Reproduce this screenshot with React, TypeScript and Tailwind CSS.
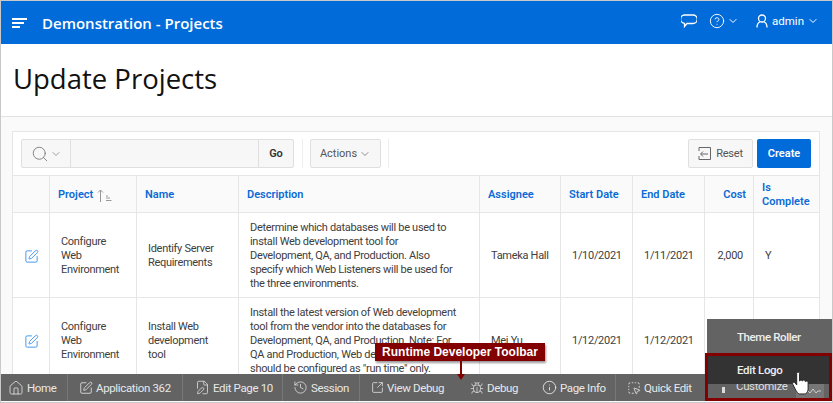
import { ChevronDown, CircleHelp, Search, SquarePen, House, FilePen, History, SquareArrowOutUpRight, Bug, Info, SquareDashedMousePointer } from "lucide-react";

const cols = [37, 87, 102, 241, 81, 72, 72, 49, 65];
const heads = ["", "Project", "Name", "Description", "Assignee", "Start Date", "End Date", "Cost", "Is Complete"];
const cell = "border-r border-b border-[#e6e6e6] pt-[2px]";

function Row({ name, desc, who, a, b, cost, done }: { name: string; desc: string[]; who: string; a: string; b: string; cost: string; done: string }) {
  return (
    <tr className="h-[85px] bg-white tracking-[-0.3px]">
      <td className={`${cell} text-center`}><SquarePen size={15} strokeWidth={1.5} className="inline text-[#3f93ea]" /></td>
      <td className={`${cell} pl-[11px]`}>Configure<br />Web<br />Environment</td>
      <td className={`${cell} pl-[11px] pr-[18px]`}>{name}</td>
      <td className={`${cell} pl-[11px] whitespace-nowrap`}>{desc.map((d) => <div key={d}>{d}</div>)}</td>
      <td className={`${cell} pl-[11px]`}>{who}</td>
      <td className={`${cell} pl-[11px]`}>{a}</td>
      <td className={`${cell} pl-[11px]`}>{b}</td>
      <td className={`${cell} text-right pr-[10px]`}>{cost}</td>
      <td className="border-b border-[#e6e6e6] pt-[2px] pl-[11px]">{done}</td>
    </tr>
  );
}

function Tool({ icon, label, sep = true, w, pl }: { icon: React.ReactNode; label: string; sep?: boolean; w: string; pl: string }) {
  return (
    <div className={`${w} ${pl} h-full flex items-center gap-[3px] shrink-0 ${sep ? "border-r border-[#777]" : ""}`}>
      {icon}<span className="pt-[1px]">{label}</span>
    </div>
  );
}

export default function App() {
  const ic = "text-[#e8e8e8]";
  return (
    <div className="relative w-[833px] h-[403px] overflow-hidden bg-[#fafafa] border border-[#c9c9c9] text-[11px] leading-[14px] text-[#404040] font-['Roboto','Open_Sans',sans-serif]">
      <header className="h-[43px] bg-[#016bda] text-white flex items-center">
        <svg width="16" height="10" viewBox="0 0 16 10" className="ml-[11px] mr-[14px]" fill="white"><rect x="0" y="0" width="15" height="2" /><rect x="0" y="4" width="12" height="2" /><rect x="0" y="8" width="8" height="2" /></svg>
        <span className="text-[15px] font-semibold font-['Open_Sans',sans-serif]">Demonstration - Projects</span>
        <div className="ml-auto flex items-center text-[11.5px] pb-[3px]">
          <svg width="16" height="14" viewBox="0 0 16 14" fill="none" stroke="white" strokeWidth="1.3"><path d="M4 1h8a3.300 3.300 0 0 1 0 8.500H6L3.500 12.500V9.300A3.300 3.300 0 0 1 4 1z" /></svg>
          <CircleHelp size={16} strokeWidth={1.4} className="ml-[12px]" />
          <ChevronDown size={12} strokeWidth={2} className="ml-[2px]" />
          <svg width="12" height="14" viewBox="0 0 12 14" fill="none" stroke="white" strokeWidth="1.3" className="ml-[17px]"><circle cx="6" cy="4.500" r="3.500" /><path d="M1 13.500c0-3 1.500-5 3-5.500M11 13.500c0-3-1.500-5-3-5.500" /></svg>
          <span className="ml-[4px]">admin</span>
          <ChevronDown size={12} strokeWidth={2} className="ml-[3px] mr-[13px]" />
        </div>
      </header>
      <div className="h-[73px] bg-white border-b border-[#e2e2e2] flex items-center pl-[12px] pb-[2px] text-[27.5px] text-[#111] font-['Open_Sans',sans-serif]">Update Projects</div>
      <section className="ml-[11px] mt-[14px] w-[808px] border border-[#e6e6e6] bg-white">
        <div className="h-[44px] flex items-center pl-[8px] pr-[8px] border-b border-[#e6e6e6]">
          <div className="h-[29px] w-[273px] flex border border-[#dfdfdf] rounded-[2px] bg-[#f7f7f7]">
            <div className="w-[49px] flex items-center justify-center border-r border-[#dfdfdf] text-[#707070]"><Search size={18} strokeWidth={1.1} /><ChevronDown size={12} strokeWidth={1.3} className="ml-[1px]" /></div>
            <div className="flex-1" />
            <div className="w-[35px] flex items-center justify-center border-l border-[#dfdfdf] font-semibold text-[#333]">Go</div>
          </div>
          <div className="w-px h-[29px] bg-[#eee] ml-[8px]" />
          <div className="h-[29px] w-[71px] ml-[7px] flex items-center justify-center border border-[#dfdfdf] rounded-[2px] bg-[#f7f7f7] text-[#555]">Actions<ChevronDown size={12} strokeWidth={1.3} className="ml-[2px]" /></div>
          <div className="w-px h-[29px] bg-[#eee] ml-[7px]" />
          <div className="h-[29px] w-[65px] ml-auto flex items-center justify-center gap-[5px] border border-[#dfdfdf] rounded-[2px] bg-[#f7f7f7] text-[#555] tracking-[-0.2px]">
            <svg width="13" height="13" viewBox="0 0 13 13" fill="none" stroke="#666"><path d="M1 4V.5h11.500v12H1V9M10 7H3M5 4.500 2.500 7 5 9.500" /></svg>
            Reset
          </div>
          <div className="h-[29px] w-[54px] ml-[4px] flex items-center justify-center rounded-[2px] bg-[#016bda] text-white font-semibold">Create</div>
        </div>
        <table className="table-fixed border-separate border-spacing-0 w-[806px]">
          <colgroup>{cols.map((c, i) => <col key={i} style={{ width: c }} />)}</colgroup>
          <thead>
            <tr className="h-[37px] bg-[#fafafa]">
              {heads.map((t, i) => (
                <th key={i} className={`font-semibold text-[#0a6bd6] border-b border-[#e6e6e6] pt-[2px] ${i === 7 ? "text-right pr-[7px]" : "text-left pl-[8px]"} ${i < 8 ? "border-r" : ""}`}>
                  {t}
                  {i === 1 && <svg width="15" height="13" viewBox="0 0 15 13" className="inline ml-[4px] text-[#999]" fill="none" stroke="currentColor"><path d="M3.500 13V1M1 3.500l2.500-2.500 2.500 2.500M9 7h2M9 9h4M9 11.500h5.500" /></svg>}
                </th>
              ))}
            </tr>
          </thead>
          <tbody>
            <Row name="Identify Server Requirements" desc={["Determine which databases will be used to", "install Web development tool for", "Development, QA, and Production. Also", "specify which Web Listeners will be used for", "the three environments."]} who="Tameka Hall" a="1/10/2021" b="1/11/2021" cost="2,000" done="Y" />
            <Row name="Install Web development tool" desc={["Install the latest version of Web development", "tool from the vendor into the databases for", "Development, QA, and Production. Note: For", "QA and Production, Web development tool", "should be configured as \"run time\" only."]} who="Mei Yu" a="1/12/2021" b="1/12/2021" cost="" done="" />
          </tbody>
        </table>
      </section>

      {/* developer toolbar */}
      <div className="absolute left-0 top-[373px] w-[831px] h-[27px] bg-[#636363] text-[#e8e8e8] text-[11.5px] tracking-[-0.35px] flex items-center">
        <Tool w="w-[67px]" pl="pl-[7px]" label="Home" icon={<House size={16} strokeWidth={1.2} className={ic} />} />
        <Tool w="w-[115px]" pl="pl-[11px]" label="Application 362" icon={<SquarePen size={14} strokeWidth={1.4} className={ic} />} />
        <Tool w="w-[100px]" pl="pl-[12px]" label="Edit Page 10" icon={<FilePen size={15} strokeWidth={1.2} className={ic} />} />
        <Tool w="w-[77px]" pl="pl-[10px]" label="Session" icon={<History size={15} strokeWidth={1.2} className={ic} />} />
        <Tool w="w-[90px]" pl="pl-[11px]" sep={false} label="View Debug" icon={<SquareArrowOutUpRight size={13} strokeWidth={1.4} className={ic} />} />
        <Tool w="w-[72px]" pl="pl-[20px]" sep={false} label="Debug" icon={<Bug size={14} strokeWidth={1.2} className={ic} />} />
        <Tool w="w-[94px]" pl="pl-[20px]" label="Page Info" icon={<Info size={15} strokeWidth={1.4} className={ic} />} />
        <Tool w="w-[90px]" pl="pl-[11px]" label="Quick Edit" icon={<SquareDashedMousePointer size={14} strokeWidth={1.4} className={ic} />} />
      </div>

      {/* callout */}
      <div className="absolute left-[374px] top-[342px] h-[18px] w-[170px] bg-[#820000] text-white font-bold text-[12px] flex items-center justify-center shadow-[1px_2px_2px_rgba(0,0,0,0.4)] font-['Liberation_Sans',sans-serif]">Runtime Developer Toolbar</div>
      <svg width="10" height="20" viewBox="0 0 10 20" className="absolute left-[455px] top-[360px]"><path d="M4 0h2v13h3l-4 6-4-6h3z" fill="#820000" /></svg>

      {/* menu */}
      <div className="absolute left-[706px] top-[318px] w-[125px] h-[35px] bg-[#636363] text-[#eee] text-[11.5px] tracking-[-0.4px] font-medium flex items-center pl-[30px]">Theme Roller</div>
      <div className="absolute left-[704px] top-[352px] w-[127px] h-[48px] border-[3px] border-[#820000] bg-[#636363] overflow-hidden">
        <div className="h-[28px] bg-[#333] text-[#eee] text-[11.5px] tracking-[-0.3px] font-medium flex items-center pl-[29px]">Edit Logo</div>
        <div className="relative flex h-[14px] text-[#ddd] text-[11.5px] tracking-[-0.35px] overflow-hidden">
          <div className="w-[3px] h-[6px] mt-[3px] ml-[14px] bg-[#ddd] shrink-0" />
          <span className="ml-[11px] -mt-[5px] leading-[14px]">Customize</span>
          <div className="absolute right-[5px] top-0 w-[28px] h-[14px] bg-[#777]" />
          <svg width="16" height="6" viewBox="0 0 16 6" className="absolute right-[8px] top-[4px]" fill="none" stroke="#ccc"><path d="M0 3h3l2 2 3-4 3 4 2-2h3" /></svg>
        </div>
      </div>
      <svg width="19" height="25" viewBox="0 0 20 26" className="absolute left-[790px] top-[370px]"><path d="M6 2.500c0-2 3-2 3 0v8c0-1.500 3-1.500 3 0 0-1.500 3-1.500 3 .5 0-1 3-1 3 1v7c0 3-2 5-4 5H9c-2 0-3-3-4-4l-3-6c-1-2 1-3 2-2l2 2.500z" fill="white" stroke="#222" strokeWidth="1" /></svg>
    </div>
  );
}
